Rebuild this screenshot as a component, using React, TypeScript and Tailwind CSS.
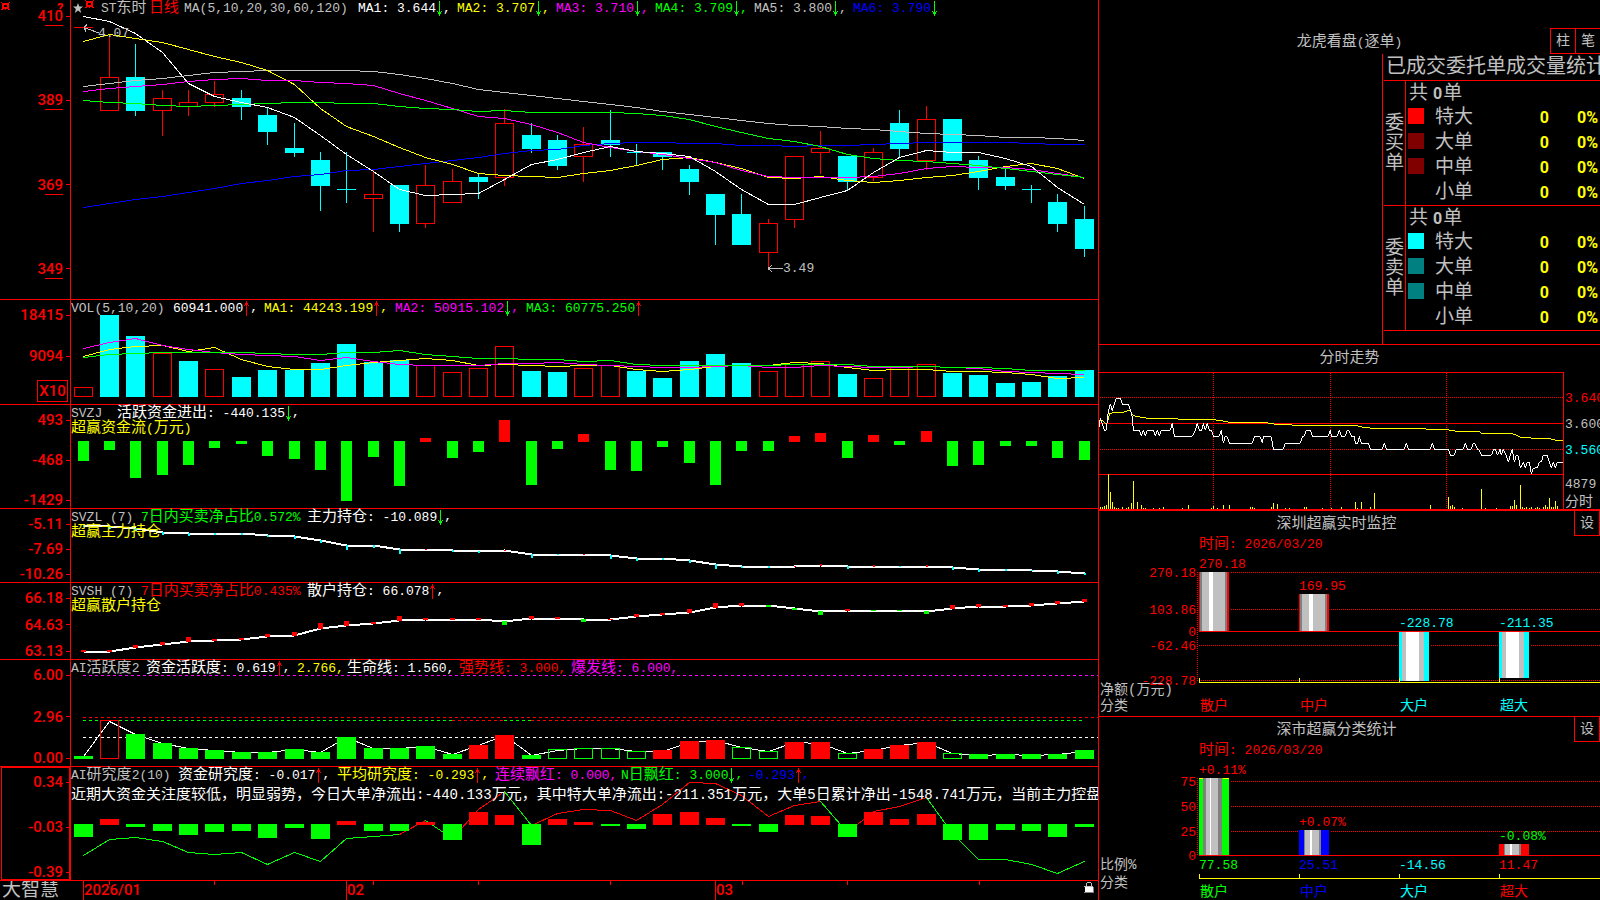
import React from "react";

const RED = "#ff0000";
const GREEN = "#00ff00";
const CYAN = "#00ffff";
const YELLOW = "#ffff00";
const MAGENTA = "#ff00ff";
const BLUE = "#0000ff";
const SILVER = "#c0c0c0";
const GREY = "#808080";
const WHITE = "#ffffff";

const MONO = '"Liberation Mono", "Noto Sans CJK SC", monospace';

/* ---------- geometry shared by all panels on the left ---------- */
const X0 = 71;
const W = 1027;
const bx = (i: number) => Math.floor(74.29 + 26.34 * i);
const mid = (i: number) => bx(i) + 9.5;
/* series are stored in thirds of a unit, counted from the panel's origin */
const Y = (origin: number, v: number) => Math.round(origin + v / 3);
const pct = (x: number) => `${((x - X0) / W) * 100}%`;

/* ---------- data ---------- */
type Candle = [kind: "r" | "c", high: number, top: number, bottom: number, low: number];
const candles: Candle[] = [
  ["r", 27, 27, 28, 27], ["r", 36, 77, 111, 111], ["c", 44, 77, 111, 116], ["r", 90, 98, 111, 136],
  ["r", 90, 102, 107, 116], ["r", 81, 94, 103, 107], ["c", 90, 98, 107, 120], ["c", 107, 115, 132, 145],
  ["c", 123, 148, 153, 157], ["c", 152, 160, 186, 211], ["c", 152, 189, 190, 203], ["r", 170, 194, 199, 232],
  ["c", 185, 185, 224, 232], ["r", 165, 185, 224, 228], ["r", 169, 181, 203, 203], ["c", 173, 177, 182, 199],
  ["r", 109, 123, 178, 186], ["c", 123, 135, 149, 153], ["c", 135, 140, 166, 170], ["r", 127, 144, 157, 182],
  ["c", 110, 140, 145, 157], ["c", 144, 152, 153, 165], ["c", 152, 152, 157, 170], ["c", 165, 169, 182, 195],
  ["c", 194, 194, 215, 245], ["c", 194, 214, 245, 245], ["r", 219, 223, 253, 268], ["r", 156, 156, 220, 228],
  ["r", 131, 148, 153, 174], ["c", 156, 156, 182, 190], ["r", 148, 152, 178, 181], ["c", 110, 123, 149, 157],
  ["r", 106, 119, 161, 170], ["c", 119, 119, 161, 161], ["c", 156, 160, 178, 190], ["c", 167, 177, 186, 190],
  ["c", 185, 189, 190, 203], ["c", 194, 202, 224, 232], ["c", 206, 219, 249, 257],
];

const priceMa: [string, number[]][] = [
  [BLUE, [622, 610, 598, 589, 577, 564, 550, 541, 529, 521, 511, 506, 499, 490, 481, 471, 460, 451, 446, 436, 430, 427, 427, 429, 430, 436, 436, 437, 436, 434, 433, 430, 427, 427, 427, 427, 429, 433, 433]],
  [SILVER, [259, 248, 241, 234, 226, 217, 212, 209, 209, 209, 211, 214, 222, 234, 249, 267, 277, 284, 295, 303, 313, 320, 333, 342, 352, 361, 370, 374, 377, 383, 388, 394, 398, 402, 406, 410, 412, 415, 419]],
  [YELLOW, [124, 103, 115, 125, 148, 168, 185, 211, 252, 324, 377, 409, 442, 470, 493, 520, 526, 529, 532, 520, 509, 496, 476, 471, 486, 503, 532, 535, 529, 541, 545, 541, 532, 526, 514, 497, 488, 505, 535]],
  [MAGENTA, [274, 265, 259, 251, 243, 236, 233, 239, 241, 245, 250, 256, 280, 299, 324, 347, 355, 371, 396, 425, 441, 452, 462, 473, 487, 510, 529, 532, 532, 532, 527, 519, 503, 499, 500, 500, 508, 520, 532]],
  [GREEN, [301, 305, 310, 314, 317, 315, 311, 308, 305, 305, 308, 308, 319, 325, 328, 332, 329, 335, 337, 337, 335, 339, 345, 357, 377, 396, 415, 424, 438, 463, 474, 481, 484, 489, 496, 505, 514, 523, 532]],
  [WHITE, [49, 62, 100, 155, 248, 288, 306, 320, 352, 404, 461, 512, 567, 586, 583, 579, 536, 493, 478, 457, 438, 452, 460, 468, 514, 568, 612, 612, 592, 571, 516, 472, 451, 457, 455, 475, 499, 562, 612]],
];

const volume: [string, number][] = [
  ["r", 277], ["c", 60], ["c", 123], ["r", 175], ["c", 198], ["r", 223], ["c", 246], ["c", 225], ["c", 225], ["c", 204],
  ["c", 147], ["c", 201], ["c", 194], ["r", 209], ["r", 232], ["r", 220], ["r", 154], ["c", 228], ["c", 231], ["r", 220],
  ["r", 209], ["c", 228], ["c", 249], ["c", 198], ["c", 177], ["c", 204], ["r", 229], ["r", 207], ["r", 199], ["c", 237],
  ["r", 250], ["r", 217], ["r", 208], ["c", 234], ["c", 240], ["c", 264], ["c", 261], ["c", 243], ["c", 225],
];
const volumeMa: [string, number[]][] = [
  [YELLOW, [182, 163, 152, 149, 167, 157, 193, 214, 223, 223, 211, 200, 194, 190, 196, 209, 206, 209, 213, 211, 209, 223, 229, 223, 214, 211, 211, 202, 205, 217, 226, 223, 223, 229, 229, 232, 238, 249, 247]],
  [MAGENTA, [160, 142, 130, 150, 161, 170, 178, 181, 184, 196, 185, 197, 206, 209, 211, 211, 203, 203, 202, 206, 210, 213, 216, 216, 213, 211, 215, 215, 210, 212, 216, 216, 214, 216, 220, 228, 232, 235, 238]],
  [GREEN, [187, 178, 175, 172, 170, 170, 170, 175, 178, 176, 172, 170, 166, 178, 184, 190, 190, 193, 193, 199, 196, 206, 211, 211, 211, 211, 211, 208, 208, 208, 212, 214, 214, 217, 217, 218, 226, 226, 226]],
];

const flow = [498, 465, 549, 540, 510, 459, 447, 483, 492, 525, 618, 486, 573, 429, 489, 471, 375, 570, 462, 417, 525, 528, 456, 504, 570, 468, 468, 423, 414, 489, 420, 450, 408, 513, 510, 453, 453, 489, 495];

const mainHold = [689, 692, 700, 710, 714, 715, 714, 721, 724, 735, 749, 750, 762, 763, 766, 768, 764, 776, 776, 776, 780, 789, 790, 795, 808, 812, 812, 812, 810, 812, 812, 812, 812, 817, 822, 823, 826, 828, 834];
/* positive = rise mark, negative = fall mark */
const mainMarks = [-6, -8, -9, -8, -8, -5, -5, -5, -8, -9, -15, -8, -14, 3, -6, -5, 4, -12, -3, 4, -12, -8, -6, -8, -14, -6, -5, 3, 5, -8, 5, -3, 5, -8, -8, -5, -4, -8, -5];

const retailHold = [183, 182, 172, 162, 153, 151, 148, 139, 134, 115, 106, 100, 91, 88, 87, 86, 93, 85, 84, 87, 86, 77, 73, 67, 52, 46, 46, 53, 64, 61, 60, 61, 64, 55, 49, 48, 46, 38, 32];
const retailMarks = [5, 5, 10, 8, 14, 5, 5, 10, 12, 18, 14, 5, 14, 5, 5, 5, -12, 10, 5, -9, 3, 10, 5, 11, 14, 8, -5, -5, -13, 5, -4, -3, -9, 11, 9, 5, 8, 9, 9];

const active: [string, number][] = [
  ["g", 498], ["R", 391], ["g", 432], ["g", 459], ["g", 474], ["g", 480], ["g", 486], ["g", 486], ["g", 477], ["g", 486],
  ["g", 441], ["g", 474], ["g", 474], ["g", 468], ["g", 492], ["r", 465], ["r", 435], ["g", 495], ["G", 478], ["G", 475],
  ["G", 475], ["G", 484], ["r", 480], ["r", 453], ["r", 450], ["G", 472], ["G", 484], ["r", 456], ["r", 456], ["G", 490],
  ["r", 477], ["r", 465], ["r", 456], ["G", 490], ["g", 492], ["g", 492], ["g", 492], ["g", 492], ["g", 480],
];
const activeLine = [498, 393, 432, 459, 474, 480, 486, 486, 477, 486, 441, 474, 474, 468, 492, 465, 435, 495, 480, 475, 475, 484, 482, 455, 450, 472, 484, 456, 458, 488, 480, 466, 456, 488, 494, 493, 494, 492, 482];

const study = [741, 687, 711, 723, 735, 726, 723, 744, 714, 747, 693, 723, 723, 696, 750, 666, 675, 765, 687, 696, 708, 717, 672, 666, 684, 708, 726, 675, 678, 741, 666, 687, 672, 750, 750, 720, 723, 741, 711];
const studyLine = [796, 748, 742, 754, 787, 793, 787, 821, 787, 814, 745, 739, 733, 690, 745, 656, 604, 704, 670, 658, 661, 691, 641, 577, 580, 616, 677, 646, 634, 725, 662, 649, 620, 730, 808, 808, 821, 848, 812];
const studyRuns: [string, number, number][] = [
  [GREEN, 0, 12], [RED, 12, 13], [GREEN, 13, 14], [RED, 14, 16], [GREEN, 16, 17], [RED, 17, 28], [GREEN, 28, 29], [RED, 29, 32], [GREEN, 32, 38],
];

const tickPrice =
  "27,260 31,235 37,250 43,270 49,271 52,240 55,212 61,193 67,212 73,190 79,175 91,175 97,193 115,193 121,210 127,231 130,271 148,271 154,288 160,271 166,288 172,271 190,271 196,288 202,271 208,288 214,271 241,271 247,250 253,289 307,289 316,271 322,250 328,271 335,271 340,250 346,271 352,250 358,271 364,271 370,289 388,289 394,271 400,309 406,289 412,291 418,310 487,310 493,290 511,290 517,309 520,290 544,290 550,328 580,328 586,310 631,310 637,290 643,288 649,271 661,271 667,289 715,289 721,271 724,289 742,289 748,271 754,289 766,289 772,271 778,272 784,289 793,289 796,310 803,310 808,289 814,310 835,310 841,328 877,328 883,310 889,328 943,328 949,310 955,328 1021,328 1027,310 1033,328 1075,328 1081,346 1093,346 1099,328 1120,328 1126,310 1132,328 1144,328 1150,310 1156,312 1162,328 1168,330 1174,346 1204,346 1210,330 1216,328 1222,346 1230,328 1234,346 1240,328 1249,346 1255,367 1261,346 1267,328 1273,367 1279,346 1285,348 1291,385 1300,367 1306,385 1312,367 1318,366 1324,403 1330,385 1342,383 1348,367 1354,365 1360,346 1372,346 1378,367 1384,385 1390,367 1396,385 1402,367 1420,367";
const tickAverage =
  "27,245 36,240 46,250 52,250 58,222 70,217 100,217 110,213 121,213 130,227 150,231 175,235 262,235 266,238 362,238 400,243 420,247 503,247 548,250 555,253 597,255 795,256 815,261 850,265 1004,265 1010,268 1070,268 1090,273 1168,274 1175,280 1264,280 1280,286 1291,292 1322,293 1326,295 1375,295 1395,300 1420,302";
const tickVolume =
  "31:501 37:501 43:498 49:495 55:403 61:456 67:486 73:501 79:504 85:504 97:501 109:504 115:501 124:489 130:423 142:486 154:495 160:504 166:504 190:504 208:504 220:501 277:504 295:495 364:504 370:498 382:504 400:495 418:495 481:501 487:501 493:504 544:501 550:489 562:492 586:504 598:504 643:501 649:501 697:504 724:504 754:501 796:486 802:504 814:486 841:501 853:459 1021:495 1075:471 1081:498 1087:495 1093:501 1117:504 1174:447 1186:504 1219:504 1261:498 1267:498 1273:480 1279:495 1291:435 1297:501 1303:504 1309:501 1318:504 1324:501 1336:504 1342:501 1348:504 1360:501 1366:495 1372:501 1378:474 1384:501 1390:501 1396:483 1402:498";

/* ---------- small pieces ---------- */
function Mixed({ children }: { children: string }) {
  return (
    <>
      {children.split(/([\u3000-\u9fff\uff00-\uffef]+)/).map((part, i) =>
        i % 2 ? <span key={i} className="text-[15px]">{part}</span> : part
      )}
    </>
  );
}

function Arrow({ up }: { up?: boolean }) {
  return (
    <svg viewBox="0 0 7 15" className="h-[15px] w-[7px] shrink-0" shapeRendering="crispEdges" aria-hidden="true">
      {up ? (
        <path d="M3 0h1v15H3zM2 2h3v2H2zM1 4h1v1H1zM5 4h1v1H5z" fill={RED} />
      ) : (
        <path d="M3 0h1v15H3zM2 11h3v2H2zM1 10h1v1H1zM5 10h1v1H5z" fill={GREEN} />
      )}
    </svg>
  );
}

type Seg = { t: string; c: string; dir?: "up" | "down"; end?: string };
function Head({ items }: { items: Seg[] }) {
  return (
    <header className="relative flex h-4 items-center text-[13px] leading-4 whitespace-pre">
      {items.map((s) => (
        <span key={s.t} className={`flex h-4 shrink-0 items-center ${s.c}`}>
          <span className="pt-px"><Mixed>{s.t}</Mixed></span>
          {s.dir && <Arrow up={s.dir === "up"} />}
          {s.end}
        </span>
      ))}
    </header>
  );
}

function Axis({ labels, underline, className }: { labels: string[]; underline?: boolean; className: string }) {
  return (
    <div className={`flex w-[71px] shrink-0 flex-col justify-between border-r border-[#ff0000] font-[Roboto] text-[15px] leading-4 font-medium text-[#ff0000] ${className}`}>
      {labels.map((l) => (
        <div key={l} className="flex items-center justify-end gap-[3px]">
          <span className="relative">
            {l}
            {underline && <span className="absolute right-0 -bottom-[2px] h-px w-[18px] bg-[#ff0000]" />}
          </span>
          <span className="h-px w-1 bg-[#ff0000]" />
        </div>
      ))}
    </div>
  );
}

function Plot({ top, height, children }: { top: number; height: number; children: React.ReactNode }) {
  return (
    <svg
      viewBox={`${X0} ${top} ${W} ${height}`}
      preserveAspectRatio="none"
      shapeRendering="crispEdges"
      className="absolute inset-0 h-full w-full"
      fill="none"
      aria-hidden="true"
    >
      {children}
    </svg>
  );
}

function Line({ data, origin, color, from = 0, width = 1 }: { data: number[]; origin: number; color: string; from?: number; width?: number }) {
  return <polyline points={data.map((v, i) => `${mid(i + from)},${Y(origin, v) + 0.5}`).join(" ")} stroke={color} strokeWidth={width} />;
}

function Box({ x, y, w, h, color, hollow }: { x: number; y: number; w: number; h: number; color: string; hollow?: boolean }) {
  return hollow ? (
    <rect x={x + 0.5} y={y + 0.5} width={w - 1} height={Math.max(h - 1, 0.01)} stroke={color} />
  ) : (
    <rect x={x} y={y} width={w} height={h} fill={color} />
  );
}

function Gear({ className }: { className: string }) {
  return (
    <svg viewBox="0 0 9 9" className={className} shapeRendering="crispEdges" aria-hidden="true">
      <path d="M1 1h7v6H1zM3 3v2h3V3z" fill={RED} fillRule="evenodd" />
      <path d="M0 0h1v1H0zM8 0h1v1H8zM0 7h2v1H0zM7 7h2v1H7zM4 7h1v1H4z" fill={RED} />
    </svg>
  );
}

const chartBody = "relative min-w-0 flex-1";

/* ---------- left side ---------- */
function PricePanel() {
  const mas: [string, string, string][] = [
    ["MA1: 3.644", "text-white", ","],
    ["MA2: 3.707", "text-[#ffff00]", ","],
    ["MA3: 3.710", "text-[#ff00ff]", ","],
    ["MA4: 3.709", "text-[#00ff00]", ","],
    ["MA5: 3.800", "text-[#c0c0c0]", ","],
    ["MA6: 3.790", "text-[#0000ff]", ""],
  ];
  return (
    <section className="relative flex min-h-[300px] flex-1 border-b border-[#ff0000]">
      <Gear className="absolute top-[2px] left-[1px] h-[9px] w-[9px]" />
      <span className="absolute top-[1px] left-[57px] font-[Roboto] text-[13px] leading-[13px] font-bold text-[#ff0000]">?</span>
      <Axis labels={["410", "389", "369", "349"]} underline className="pt-2 pb-[22px]" />
      <div className={chartBody}>
        <Plot top={0} height={299}>
          {candles.map(([k, hi, t, b, lo], i) => {
            const color = k === "r" ? RED : CYAN;
            return (
              <g key={i}>
                {hi < t && <rect x={mid(i) - 0.5} y={hi} width={1} height={t - hi} fill={color} />}
                {lo > b && <rect x={mid(i) - 0.5} y={b} width={1} height={lo - b} fill={color} />}
                <Box x={bx(i)} y={t} w={19} h={b - t} color={color} hollow={k === "r" && b - t > 1} />
              </g>
            );
          })}
          {priceMa.map(([c, d]) => <Line key={c} data={d} origin={0} color={c} />)}
          <path d="M84 27.5L99 33M84 27.5l3-3M84 27.5l2 4" stroke={SILVER} />
          <path d="M768 268.5h15M768 268.5l4-3M768 268.5l4 3" stroke={SILVER} />
        </Plot>
        <header className="relative flex h-[17px] items-center text-[13px] leading-4 whitespace-pre text-[#c0c0c0]">
          <svg viewBox="0 0 10 10" className="mb-px ml-[2px] h-[10px] w-[10px] shrink-0" aria-hidden="true">
            <path d="M5 0l1.3 3.6H10L7.1 5.9 8.2 10 5 7.6 1.8 10l1.1-4.1L0 3.6h3.7z" fill={SILVER} />
          </svg>
          <Gear className="mr-[7px] mb-[8px] ml-[2px] h-[9px] w-[9px] shrink-0" />
          <span className="w-[48px] shrink-0"><Mixed>ST东时</Mixed></span>
          <span className="w-[35px] shrink-0 text-[#ff0000]"><Mixed>日线</Mixed></span>
          <span className="w-[174px] shrink-0 pt-px">MA(5,10,20,30,60,120)</span>
          {mas.map(([t, c, end]) => (
            <span key={t} className={`flex w-[99px] shrink-0 items-center ${c}`}>
              <span className="pt-px">{t}</span>
              <Arrow />
              {end}
            </span>
          ))}
        </header>
        <span className="absolute top-[26px] text-[13px] leading-4 text-[#c0c0c0]" style={{ left: pct(98) }}>4.07</span>
        <span className="absolute top-[261px] text-[13px] leading-4 text-[#c0c0c0]" style={{ left: pct(783) }}>3.49</span>
      </div>
    </section>
  );
}

function VolumePanel() {
  return (
    <section className="flex h-[105px] border-b border-[#ff0000]">
      <div className="flex w-[71px] shrink-0 flex-col border-r border-[#ff0000] pt-[7px] font-[Roboto] text-[15px] leading-4 font-medium text-[#ff0000]">
        {["18415", "9094"].map((l) => (
          <div key={l} className="mb-[25px] flex items-center justify-end gap-[3px]">
            {l}
            <span className="h-px w-1 bg-[#ff0000]" />
          </div>
        ))}
        <span className="-mt-[9px] mr-[2px] flex h-[22px] w-[31px] items-center justify-center self-end border border-[#ff0000]">X10</span>
      </div>
      <div className={chartBody}>
        <Plot top={300} height={104}>
          {volume.map(([k, v], i) => (
            <Box key={i} x={bx(i)} y={Y(295, v)} w={19} h={397 - Y(295, v)} color={k === "r" ? RED : CYAN} hollow={k === "r"} />
          ))}
          {volumeMa.map(([c, d]) => <Line key={c} data={d} origin={295} color={c} />)}
        </Plot>
        <Head
          items={[
            { t: "VOL(5,10,20)", c: "w-[102px] text-[#c0c0c0]" },
            { t: "60941.000", c: "w-[91px] text-white", dir: "up", end: "," },
            { t: "MA1: 44243.199", c: "w-[131px] text-[#ffff00]", dir: "up", end: "," },
            { t: "MA2: 50915.102", c: "w-[131px] text-[#ff00ff]", dir: "down", end: "," },
            { t: "MA3: 60775.250", c: "text-[#00ff00]", dir: "up" },
          ]}
        />
      </div>
    </section>
  );
}

function FlowPanel() {
  return (
    <section className="flex h-[104px] border-b border-[#ff0000]">
      <Axis labels={["493", "-468", "-1429"]} className="pt-[7px]" />
      <div className={chartBody}>
        <Plot top={405} height={103}>
          {flow.map((v, i) => {
            const y = Y(295, v);
            return y < 441 ? (
              <rect key={i} x={bx(i) + 4} y={y} width={11} height={442 - y} fill={RED} />
            ) : (
              <rect key={i} x={bx(i) + 4} y={441} width={11} height={y - 441} fill={GREEN} />
            );
          })}
        </Plot>
        <Head
          items={[
            { t: "SVZJ", c: "w-[46px] text-[#c0c0c0]" },
            { t: "活跃资金进出: -440.135", c: "text-white", dir: "down", end: "," },
          ]}
        />
        <p className="relative text-[13px] leading-[15px] text-[#ffff00]"><Mixed>超赢资金流(万元)</Mixed></p>
      </div>
    </section>
  );
}

function HoldPanel({ kind }: { kind: "main" | "retail" }) {
  const main = kind === "main";
  const data = main ? mainHold : retailHold;
  const marks = main ? mainMarks : retailMarks;
  const origin = main ? 295 : 590;
  return (
    <section className={`flex border-b border-[#ff0000] ${main ? "h-[74px]" : "h-[77px]"}`}>
      <Axis labels={main ? ["-5.11", "-7.69", "-10.26"] : ["66.18", "64.63", "63.13"]} className="pt-[7px]" />
      <div className={chartBody}>
        <Plot top={main ? 509 : 583} height={main ? 73 : 76}>
          <Line data={data} origin={origin} color={WHITE} width={2} />
          {marks.map((m, i) => {
            const h = Math.max(1, Math.round(Math.abs(m) / 3));
            const w = main ? 2 : 5;
            const y = Y(origin, data[i]);
            return <rect key={i} x={mid(i) - w / 2} y={m > 0 ? y - h + 1 : y} width={w} height={h} fill={m > 0 ? RED : main ? CYAN : GREEN} />;
          })}
        </Plot>
        <Head
          items={
            main
              ? [
                  { t: "SVZL (7)", c: "w-[70px] text-[#c0c0c0]" },
                  { t: "7日内买卖净占比0.572%", c: "w-[166px] text-[#00ff00]" },
                  { t: "主力持仓: -10.089", c: "text-white", dir: "down", end: "," },
                ]
              : [
                  { t: "SVSH (7)", c: "w-[70px] text-[#c0c0c0]" },
                  { t: "7日内买卖净占比0.435%", c: "w-[166px] text-[#ff0000]" },
                  { t: "散户持仓: 66.078", c: "text-white", dir: "up", end: "," },
                ]
          }
        />
        <p className="relative text-[15px] leading-[15px] text-[#ffff00]">{main ? "超赢主力持仓" : "超赢散户持仓"}</p>
      </div>
    </section>
  );
}

function ActivePanel() {
  return (
    <section className="flex h-[107px] border-b border-[#ff0000]">
      <Axis labels={["6.00", "2.96", "0.00"]} className="pt-[7px]" />
      <div className={chartBody}>
        <Plot top={660} height={106}>
          <g strokeDasharray="3 3">
            <path d="M83 675.5H1098" stroke={MAGENTA} />
            <path d="M83 717.5H1098" stroke={RED} />
            <path d="M83 720.5H452M504 720.5H531M953 720.5H1084" stroke={GREEN} />
            <path d="M452 720.5H504M531 720.5H953" stroke={RED} />
            <path d="M83 737.5H1098" stroke={WHITE} />
          </g>
          <Line data={activeLine} origin={590} color={WHITE} />
          {active.map(([k, v], i) => (
            <Box
              key={i}
              x={bx(i)}
              y={Y(590, v)}
              w={19}
              h={759 - Y(590, v)}
              color={k.toLowerCase() === "r" ? RED : GREEN}
              hollow={k === "R" || k === "G"}
            />
          ))}
        </Plot>
        <Head
          items={[
            { t: "AI活跃度2", c: "w-[75px] text-[#c0c0c0]" },
            { t: "资金活跃度: 0.619", c: "w-[151px] text-white", dir: "up", end: "," },
            { t: "2.766,", c: "w-[50px] text-[#ffff00]" },
            { t: "生命线: 1.560,", c: "w-[112px] text-white" },
            { t: "强势线: 3.000,", c: "w-[112px] text-[#ff0000]" },
            { t: "爆发线: 6.000,", c: "text-[#ff00ff]" },
          ]}
        />
      </div>
    </section>
  );
}

function StudyPanel() {
  return (
    <section className="relative flex h-[114px] border-b border-[#ff0000]">
      <span className="absolute inset-y-0 left-[1px] w-[69px] border border-[#ff0000]" />
      <Axis labels={["0.34", "-0.03", "-0.39"]} className="pt-[7px]" />
      <div className={chartBody}>
        <Plot top={767} height={113}>
          {studyRuns.map(([c, a, b]) => (
            <Line key={a} data={studyLine.slice(a, b + 1)} from={a} origin={590} color={c} />
          ))}
          {study.map((v, i) => {
            const y = Y(590, v);
            return y < 824 ? (
              <rect key={i} x={bx(i)} y={y} width={19} height={825 - y} fill={RED} />
            ) : (
              <rect key={i} x={bx(i)} y={824} width={19} height={y - 824} fill={GREEN} />
            );
          })}
        </Plot>
        <Head
          items={[
            { t: "AI研究度2(10)", c: "w-[107px] text-[#c0c0c0]" },
            { t: "资金研究度: -0.017", c: "w-[159px] text-white", dir: "up", end: "," },
            { t: "平均研究度: -0.293", c: "w-[158px] text-[#ffff00]", dir: "up", end: "," },
            { t: "连续飘红: 0.000,", c: "w-[126px] text-[#ff00ff]" },
            { t: "N日飘红: 3.000", c: "w-[127px] text-[#00ff00]", dir: "down", end: "," },
            { t: "-0.293", c: "text-[#0000ff]", dir: "up", end: "," },
          ]}
        />
        <p className="relative mt-1 overflow-hidden text-[14px] leading-4 whitespace-nowrap text-white">
          <Mixed>近期大资金关注度较低，明显弱势，今日大单净流出:-440.133万元，其中特大单净流出:-211.351万元，大单5日累计净出-1548.741万元，当前主力控盘</Mixed>
        </p>
      </div>
    </section>
  );
}

function TimeAxis() {
  const months: [number, string][] = [[83, "2026/01"], [346, "02"], [715, "03"]];
  return (
    <footer className="flex h-[19px]">
      <span className="w-[71px] shrink-0 pl-[2px] text-[19px] leading-[21px] text-[#c0c0c0]">大智慧</span>
      <div className={`${chartBody} font-[Roboto] text-[15px] leading-[19px] font-medium text-[#ff0000]`}>
        <Plot top={881} height={19}>
          {months.map(([x]) => <rect key={x} x={x} y={881} width={1} height={19} fill={RED} />)}
          {[109, 214, 373, 478, 610, 742, 847, 979].map((x) => <rect key={x} x={x} y={881} width={1} height={4} fill={RED} />)}
        </Plot>
        {months.map(([x, t]) => (
          <span key={x} className="absolute top-0" style={{ left: pct(x + 1) }}>{t}</span>
        ))}
        <svg viewBox="0 0 11 12" className="absolute top-[1px] right-[3px] h-3 w-[11px]" shapeRendering="crispEdges" aria-label="锁定">
          <path d="M2 4V1h1V0h4v1h1v3H7V1H3v3z" fill={SILVER} />
          <path d="M1 5h8v5H1z" fill={WHITE} />
          <path d="M9 5h1v6H0v-1h9z" fill={GREY} />
          <path d="M0 4h9v1H0z" fill={SILVER} />
        </svg>
      </div>
    </footer>
  );
}

/* ---------- right side ---------- */
function OrderTable() {
  const groups: [string, string, [string, string][]][] = [
    ["委买单", "buy", [["特大", "bg-[#ff0000]"], ["大单", "bg-[#800000]"], ["中单", "bg-[#800000]"], ["小单", ""]]],
    ["委卖单", "sell", [["特大", "bg-[#00ffff]"], ["大单", "bg-[#008080]"], ["中单", "bg-[#008080]"], ["小单", ""]]],
  ];
  return (
    <table className="w-full table-fixed border-separate border-spacing-0 border-b border-[#ff0000] text-left">
      <colgroup>
        <col className="w-[22px]" />
        <col className="w-[29px]" />
        <col className="w-[60px]" />
        <col />
        <col className="w-[50px]" />
      </colgroup>
      {groups.map(([name, key, rows]) => (
        <tbody key={key}>
          <tr className="h-[25px]">
            <th rowSpan={5} scope="rowgroup" className="border-t border-r border-[#ff0000] p-0 pt-[2px] text-center align-middle text-[19px] leading-5 font-normal">
              <span className="mx-auto block w-[19px] break-all">{name}</span>
            </th>
            <td colSpan={4} className="border-t border-[#ff0000] p-0 pt-[2px] pl-[3px] text-[19px] leading-5">
              共<span className="mr-[1px] ml-[5px] font-[Roboto] text-base leading-5 font-bold">0</span>单
            </td>
          </tr>
          {rows.map(([label, swatch]) => (
            <tr key={label} className="h-[25px]">
              <td className="p-0 pt-[3px] pl-[2px] align-top"><span className={`block h-4 w-4 ${swatch}`} /></td>
              <td className="p-0 text-[19px] leading-5">{label}</td>
              <td className="p-0 pr-[1px] text-right font-[Roboto] text-base leading-5 font-bold text-[#ffff00]">0</td>
              <td className="p-0 pr-[2px] text-right font-[Roboto] text-base leading-5 font-bold text-[#ffff00]">0%</td>
            </tr>
          ))}
        </tbody>
      ))}
    </table>
  );
}

const boxBtn = "flex h-[26px] shrink-0 items-center justify-center border border-[#ff0000] text-[14px] leading-4 text-[#c0c0c0]";

function OrdersPanel() {
  return (
    <section className="flex min-h-[345px] flex-1 flex-col border-b border-[#ff0000]">
      <div className="relative flex items-end justify-center pt-[28px]">
        <h2 className="mb-[3px] text-[13px] leading-4"><Mixed>龙虎看盘(逐单)</Mixed></h2>
        <div className="absolute right-0 bottom-0 flex">
          <button type="button" className={`${boxBtn} w-[25px] border-r-0`}>柱</button>
          <button type="button" className={`${boxBtn} w-[25px] border-r-0`}>笔</button>
        </div>
        <span className="h-[26px]" />
      </div>
      <div className="ml-auto flex w-[218px] flex-1 flex-col overflow-hidden border-l border-[#ff0000] pl-px">
        <h3 className="h-[26px] pl-[2px] text-[20px] leading-[27px] whitespace-nowrap">已成交委托单成交量统计</h3>
        <OrderTable />
      </div>
    </section>
  );
}

function TickPanel() {
  return (
    <section className="h-[166px] border-b-2 border-[#ff0000]">
      <h2 className="h-[27px] text-center text-[15px] leading-7">分时走势</h2>
      <svg viewBox="1099 372 501 137" className="h-[137px] w-[501px]" shapeRendering="crispEdges" fill="none" fontFamily={MONO} fontSize={13}>
        <path d="M1099 372.5H1563.5V509M1099 423.5H1563M1099 474.5H1563" stroke={RED} />
        <path d="M1100 397.5H1563M1100 449.5H1563M1213.5 373V509M1330.5 373V509M1446.5 373V509" stroke={RED} strokeDasharray="1 1" />
        <g transform="translate(1090 340) scale(.33333)" strokeWidth={3}>
          <polyline points={tickAverage} stroke={YELLOW} />
          <polyline points={tickPrice} stroke={WHITE} />
          {tickVolume.split(" ").map((p) => {
            const [x, y] = p.split(":").map(Number);
            return <rect key={x} x={x - 1} y={y} width={3} height={507 - y} fill={YELLOW} />;
          })}
        </g>
        <text x={1565} y={402} fill={RED}>3.640</text>
        <text x={1565} y={428} fill={SILVER}>3.600</text>
        <text x={1565} y={454} fill={CYAN}>3.560</text>
        <text x={1565} y={488} fill={SILVER}>4879</text>
        <text x={1565} y={506} fill={SILVER} fontSize={14}>分时</text>
      </svg>
    </section>
  );
}

type Stripe = [number, number, string];
const stripes = {
  red: [[0, 1, RED], [1, 2, GREY], [3, 7, SILVER], [10, 4, WHITE], [14, 12, SILVER], [26, 2, GREY], [28, 2, RED]] as Stripe[],
  cyan: [[0, 3, CYAN], [3, 4, SILVER], [7, 13, WHITE], [20, 5, SILVER], [25, 5, CYAN]] as Stripe[],
  green: [[0, 4, GREEN], [4, 3, GREY], [7, 4, SILVER], [11, 1, WHITE], [12, 7, SILVER], [19, 4, GREY], [23, 7, GREEN]] as Stripe[],
  blue: [[0, 5, BLUE], [5, 1, GREY], [6, 5, SILVER], [11, 2, WHITE], [13, 7, SILVER], [20, 2, GREY], [22, 8, BLUE]] as Stripe[],
  wideRed: [[0, 5, RED], [5, 1, GREY], [6, 5, SILVER], [11, 2, WHITE], [13, 7, SILVER], [20, 2, GREY], [22, 8, RED]] as Stripe[],
};

function Cylinder({ x, y, h, kind }: { x: number; y: number; h: number; kind: keyof typeof stripes }) {
  return (
    <g>
      <rect x={x} y={y} width={31} height={h} fill="#000000" />
      {stripes[kind].map(([dx, w, c]) => <rect key={dx} x={x + dx} y={y} width={w} height={h} fill={c} />)}
    </g>
  );
}

function StatTitle({ title }: { title: string }) {
  return (
    <div className="flex h-[25px] items-start">
      <h2 className="flex-1 text-center text-[15px] leading-7">{title}</h2>
      <button type="button" className={`${boxBtn} -mt-px w-[26px]`}>设</button>
    </div>
  );
}

function AmountPanel() {
  return (
    <section className="h-[206px] border-b border-[#ff0000]">
      <StatTitle title="深圳超赢实时监控" />
      <svg viewBox="1099 536 501 180" className="h-[180px] w-[501px]" shapeRendering="crispEdges" fill="none" fontFamily={MONO} fontSize={13}>
        <path d="M1199 572.5H1600M1199 609.5H1600M1199 645.5H1600M1199 680.5H1600M1197.5 572V681" stroke={RED} strokeDasharray="1 1" />
        <Cylinder x={1199} y={572} h={59} kind="red" />
        <Cylinder x={1299} y={594} h={37} kind="red" />
        <Cylinder x={1399} y={632} h={49} kind="cyan" />
        <Cylinder x={1499} y={632} h={46} kind="cyan" />
        <path d="M1199 631.5H1600" stroke={RED} />
        <path d="M1199.5 678V682.5H1600M1299.5 678V682M1399.5 678V682M1499.5 678V682" stroke={YELLOW} />
        <g fill={RED}>
          <text x={1199} y={548} fontSize={15}>时间</text>
          <text x={1229} y={548}>: 2026/03/20</text>
          <g textAnchor="end">
            <text x={1196} y={577}>270.18</text>
            <text x={1196} y={614}>103.86</text>
            <text x={1196} y={636}>0</text>
            <text x={1196} y={650}>-62.46</text>
            <text x={1196} y={685}>-228.78</text>
          </g>
          <text x={1199} y={568}>270.18</text>
          <text x={1299} y={590}>169.95</text>
        </g>
        <g fill={CYAN}>
          <text x={1399} y={627}>-228.78</text>
          <text x={1499} y={627}>-211.35</text>
        </g>
        <g fontSize={14}>
          <text x={1100} y={694} fill={SILVER}>净额(万元)</text>
          <text x={1100} y={710} fill={SILVER}>分类</text>
          <text x={1200} y={710} fill={RED}>散户</text>
          <text x={1300} y={710} fill={RED}>中户</text>
          <text x={1400} y={710} fill={CYAN}>大户</text>
          <text x={1500} y={710} fill={CYAN}>超大</text>
        </g>
      </svg>
    </section>
  );
}

function RatioPanel() {
  return (
    <section className="h-[183px]">
      <StatTitle title="深市超赢分类统计" />
      <svg viewBox="1099 742 501 158" className="h-[158px] w-[501px]" shapeRendering="crispEdges" fill="none" fontFamily={MONO} fontSize={13}>
        <path d="M1199 781.5H1600M1199 806.5H1600M1199 831.5H1600M1197.5 778V856" stroke={RED} strokeDasharray="1 1" />
        <Cylinder x={1199} y={778} h={77} kind="green" />
        <path d="M1199 778.5h4M1223 778.5h6" stroke={YELLOW} />
        <Cylinder x={1299} y={830} h={25} kind="blue" />
        <Cylinder x={1499} y={844} h={11} kind="wideRed" />
        <path d="M1199 855.5H1600" stroke={RED} />
        <path d="M1199.5 874V878.5H1600M1299.5 874V878M1399.5 874V878M1499.5 874V878" stroke={YELLOW} />
        <g fill={RED}>
          <text x={1199} y={754} fontSize={15}>时间</text>
          <text x={1229} y={754}>: 2026/03/20</text>
          <g textAnchor="end">
            <text x={1196} y={786}>75</text>
            <text x={1196} y={811}>50</text>
            <text x={1196} y={836}>25</text>
            <text x={1196} y={860}>0</text>
          </g>
          <text x={1199} y={774}>+0.11%</text>
          <text x={1299} y={826}>+0.07%</text>
        </g>
        <text x={1499} y={840} fill={GREEN}>-0.08%</text>
        <text x={1199} y={869} fill={GREEN}>77.58</text>
        <text x={1299} y={869} fill={BLUE}>25.51</text>
        <text x={1399} y={869} fill={CYAN}>-14.56</text>
        <text x={1499} y={869} fill={RED}>11.47</text>
        <g fontSize={14}>
          <text x={1100} y={869} fill={SILVER}>比例%</text>
          <text x={1100} y={887} fill={SILVER}>分类</text>
          <text x={1200} y={896} fill={GREEN}>散户</text>
          <text x={1300} y={896} fill={BLUE}>中户</text>
          <text x={1400} y={896} fill={CYAN}>大户</text>
          <text x={1500} y={896} fill={RED}>超大</text>
        </g>
      </svg>
    </section>
  );
}

export default function App() {
  return (
    <div className="grid min-h-screen grid-cols-[minmax(0,1fr)_501px] overflow-hidden bg-black font-['Liberation_Mono','Noto_Sans_CJK_SC',monospace] text-[#c0c0c0]">
      <main className="flex min-w-0 flex-col overflow-hidden border-r border-[#ff0000]">
        <PricePanel />
        <VolumePanel />
        <FlowPanel />
        <HoldPanel kind="main" />
        <HoldPanel kind="retail" />
        <ActivePanel />
        <StudyPanel />
        <TimeAxis />
      </main>
      <aside className="flex min-w-0 flex-col overflow-hidden">
        <OrdersPanel />
        <TickPanel />
        <AmountPanel />
        <RatioPanel />
      </aside>
    </div>
  );
}
